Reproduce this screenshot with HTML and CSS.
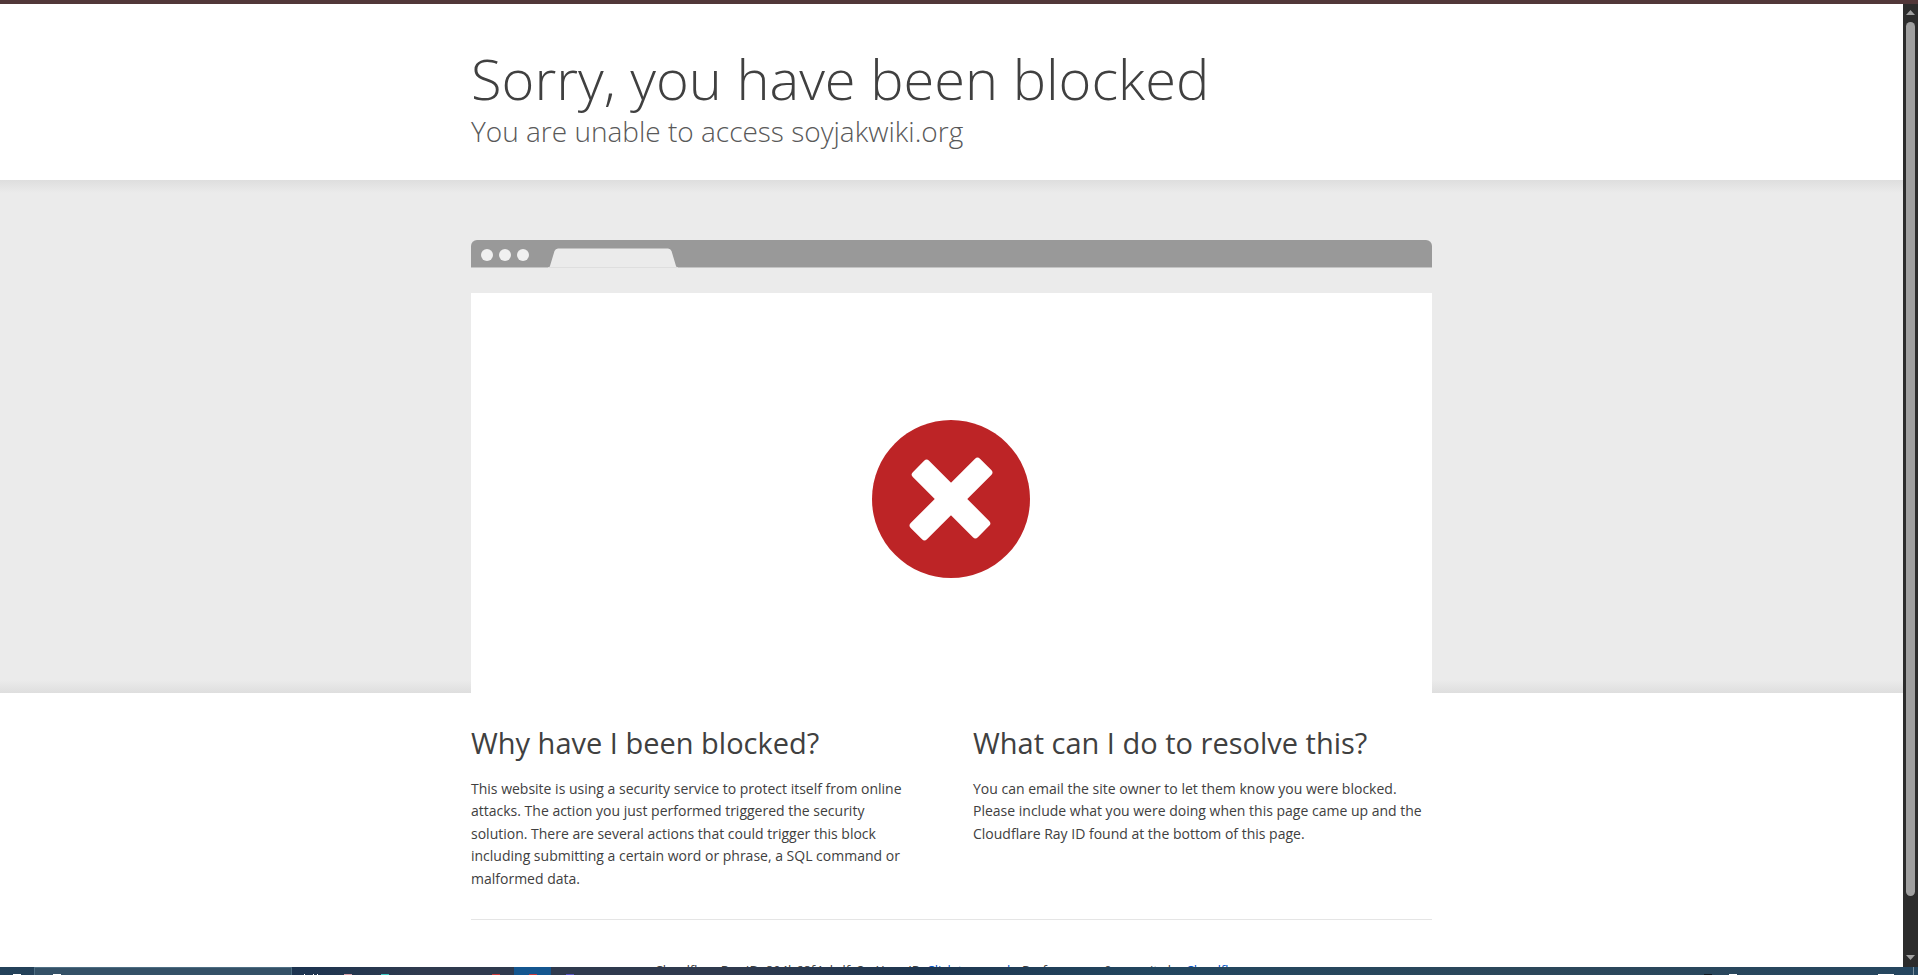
FILE: index.html
```
<!DOCTYPE html>
<html lang="en">
<head>
    <meta charset="UTF-8">
    <meta name="viewport" content="width=device-width, initial-scale=1.0">
    <title>Attention Required! | Cloudflare</title>
    <link rel="stylesheet" href="styles.css">
</head>
<body>
    <div class="top-strip"></div>
    <div class="viewport">
        <main class="page">
            <header class="wrapper header">
                <h1>Sorry, you have been blocked</h1>
                <h2 class="subheadline">You are unable to access soyjakwiki.org</h2>
            </header>
            <section class="highlight">
                <div class="wrapper">
                    <div class="browser-bar">
                        <span class="dot"></span>
                        <span class="dot"></span>
                        <span class="dot"></span>
                        <svg class="browser-tab" width="130" height="20" viewBox="0 0 130 20">
                            <path d="M0 20 Q1.500 19.500 2 18 L6.500 3 Q7.500 .5 10 .5 H120 Q122.500 .5 123.500 3 L128 18 Q128.500 19.500 130 20Z" fill="#ebebeb"/>
                            <path d="M0 19.500H130" stroke="#dedede"/>
                        </svg>
                    </div>
                    <div class="screenshot">
                        <svg class="error-icon" width="160" height="160" viewBox="0 0 160 160">
                            <circle cx="79" cy="80" r="79" fill="#bd2426"/>
                            <g fill="#fff">
                                <rect x="33" y="68.500" width="92" height="23" rx="3.500" transform="rotate(45 79 80)"/>
                                <rect x="30" y="68.500" width="98" height="23" rx="3.500" transform="rotate(-45 79 80)"/>
                            </g>
                        </svg>
                    </div>
                </div>
            </section>
            <section class="wrapper columns">
                <div class="column">
                    <h2>Why have I been blocked?</h2>
                    <p>This website is using a security service to protect itself from online attacks. The action you just performed triggered the security<br> solution. There are several actions that could trigger this block<br> including submitting a certain word or phrase, a SQL command or<br> malformed data.</p>
                </div>
                <div class="column">
                    <h2>What can I do to resolve this?</h2>
                    <p>You can email the site owner to let them know you were blocked. Please include what you were doing when this page came up and the Cloudflare Ray ID found at the bottom of this page.</p>
                </div>
            </section>
            <footer class="wrapper footer">
                <p>Cloudflare Ray ID: 894b68f4abdfa3 &bull; Your IP: <button class="reveal" type="button">Click to reveal</button> &bull; Performance &amp; security by <a href="#">Cloudflare</a></p>
            </footer>
        </main>
        <div class="scrollbar">
            <svg width="9" height="5" viewBox="0 0 9 5"><path d="M4.500 0L9 5H0z" fill="#a0a0a0"/></svg>
            <div class="thumb"></div>
            <svg width="9" height="5" viewBox="0 0 9 5"><path d="M0 0H9L4.500 5z" fill="#a0a0a0"/></svg>
        </div>
    </div>
    <nav class="taskbar" aria-label="Taskbar">
        <button class="task start" aria-label="Start"><span class="tip white"></span></button>
        <div class="search"><span class="tip white"></span></div>
        <button class="task" aria-label="Task view"><span class="tip bars"></span></button>
        <button class="task" aria-label="App"><span class="tip pink"></span></button>
        <button class="task" aria-label="App"><span class="tip teal"></span></button>
        <button class="task" aria-label="App"></button>
        <button class="task" aria-label="App"></button>
        <button class="task" aria-label="App"><span class="tip red"></span></button>
        <button class="task active" aria-label="Browser"><span class="tip red"></span></button>
        <button class="task" aria-label="App"><span class="tip purple"></span></button>
        <div class="tray">
            <span class="tip dark"></span>
            <span class="tip white"></span>
            <span class="tip white notice"></span>
            <span class="desktop-edge"></span>
        </div>
    </nav>
</body>
</html>
```
FILE: styles.css
```
* {
    box-sizing: border-box;
}
body {
    margin: 0;
    height: 100vh;
    display: flex;
    flex-direction: column;
    overflow: hidden;
    font-family: "Open Sans", "Noto Sans", sans-serif;
    color: #404040;
    background: #fff;
}
h1, h2, p {
    margin: 0;
}
.top-strip {
    height: 4px;
    flex: none;
    background: #513739;
}
.viewport {
    flex: 1;
    min-height: 0;
    display: flex;
}
.page {
    flex: 1;
    overflow: hidden;
}
.wrapper {
    width: 100%;
    max-width: 961px;
    margin: 0 auto;
}

/* Header */
.header {
    padding: 39px 0 30px;
}
.header h1 {
    font-size: 56px;
    font-weight: 300;
    line-height: 70px;
}
.subheadline {
    font-size: 28px;
    font-weight: 300;
    line-height: 37px;
    color: #595959;
}

/* Browser illustration */
.highlight {
    padding-top: 60px;
    background:
        linear-gradient(to bottom, #dedede, #ebebeb) top / 100% 13px no-repeat,
        linear-gradient(to top, #dedede, #ebebeb) bottom / 100% 13px no-repeat,
        #ebebeb;
}
.browser-bar {
    display: flex;
    align-items: center;
    gap: 6px;
    height: 28px;
    padding-left: 10px;
    margin-bottom: 25px;
    background: #999;
    border-bottom: 1px solid #c4c4c4;
    border-radius: 6px 6px 0 0;
}
.dot {
    width: 12px;
    height: 12px;
    margin-top: 3px;
    border-radius: 50%;
    background: #f0f0f0;
}
.browser-tab {
    align-self: flex-end;
    flex: none;
    margin-left: 13px;
    margin-bottom: -1px;
}
.screenshot {
    display: flex;
    justify-content: center;
    padding: 126px 0 114px;
    background: #fff;
}

/* Explanation */
.columns {
    display: flex;
    gap: 43px;
    padding: 30px 0 29px;
    border-bottom: 1px solid #e5e5e5;
}
.column {
    flex: 1;
}
.column h2 {
    margin-bottom: 15px;
    font-size: 29px;
    font-weight: 400;
    line-height: 40px;
}
.column p {
    font-size: 14px;
    line-height: 1.6;
}
.footer {
    padding: 40px 0;
    text-align: center;
    font-size: 13px;
    line-height: 20px;
}
.footer a, .reveal {
    color: #0051c3;
    text-decoration: none;
}
.reveal {
    padding: 0;
    border: 0;
    background: none;
    font: inherit;
}

/* Scrollbar */
.scrollbar {
    flex: none;
    width: 15px;
    display: flex;
    flex-direction: column;
    align-items: center;
    padding: 6px 0 7px;
    background: #2c2c2c;
}
.thumb {
    width: 9px;
    flex: 1;
    margin: 7px 0 59px;
    border-radius: 5px;
    background: #a0a0a0;
}

/* Taskbar */
.taskbar {
    flex: none;
    height: 8px;
    display: flex;
    align-items: stretch;
    background: linear-gradient(to right, #24425a 0, #1d3450 16%, #2f3a4e 22%, #2f3a4e 38%, #1e3650 48%, #22465f 60%, #2c475a 80%, #25465f 100%);
}
.task {
    width: 37px;
    padding: 0;
    border: 0;
    background: none;
    display: flex;
    align-items: flex-end;
    justify-content: center;
}
.start {
    width: 34px;
}
.search {
    width: 258px;
    padding-left: 18px;
    display: flex;
    align-items: flex-end;
    background: #345167;
    border: 1px solid #4e6e83;
    border-bottom: 0;
}
.active {
    background: #14568f;
}
.tip {
    width: 8px;
    height: 1px;
    background: #fff;
}
.bars {
    width: 14px;
    background: linear-gradient(to right, #fff 1px, transparent 1px 9px, #fff 9px 10px, transparent 10px 13px, #fff 13px);
}
.pink {
    background: #d9a3ac;
}
.teal {
    background: #3cc8c4;
}
.red {
    background: #c8393b;
}
.purple {
    background: #5b57c9;
}
.dark {
    background: #101820;
}
.tray {
    margin-left: auto;
    display: flex;
    align-items: flex-end;
    gap: 17px;
}
.notice {
    width: 16px;
    margin-left: 124px;
}
.desktop-edge {
    width: 8px;
    align-self: stretch;
    border-left: 1px solid #7a8f9d;
    margin-left: 2px;
    margin-right: -3px;
}
```
